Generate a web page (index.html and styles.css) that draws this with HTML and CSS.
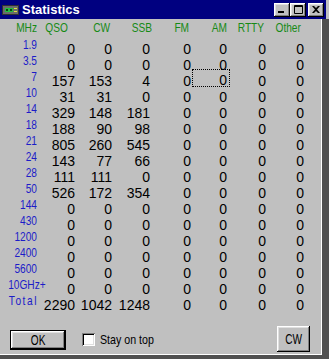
FILE: index.html
```html
<!DOCTYPE html>
<html lang="en">
<head>
    <meta charset="UTF-8">
    <title>Statistics</title>
    <link rel="stylesheet" href="styles.css">
</head>
<body>

    <div class="window">
        <div class="titlebar">
            <svg class="app-icon" width="17" height="10" viewBox="0 0 17 10">
                <rect x="0" y="0" width="17" height="10" fill="#303030"/>
                <rect x="1" y="1" width="15" height="8" fill="#6a6a6a"/>
                <rect x="3" y="3" width="8" height="4" fill="#20c040"/>
                <rect x="12" y="3" width="3" height="1" fill="#e0e040"/>
                <rect x="12" y="6" width="3" height="1" fill="#e0e040"/>
                <rect x="4" y="4" width="2" height="2" fill="#104010"/>
                <rect x="8" y="4" width="2" height="2" fill="#104010"/>
            </svg>
            <span class="title">Statistics</span>
            <div class="caption-buttons">
                <button class="cap-btn">
                    <svg width="8" height="7" viewBox="0 0 8 7"><rect x="0" y="5" width="6" height="2" fill="#000"/></svg>
                </button>
                <button class="cap-btn">
                    <svg width="9" height="9" viewBox="0 0 9 9"><path d="M0.5 0.5h8v8h-8z M0.5 1.5h8" fill="none" stroke="#000"/></svg>
                </button>
                <button class="cap-btn close">
                    <svg width="8" height="7" viewBox="0 0 8 7"><path d="M0 0h2l2 2 2-2h2l-3 3.5 3 3.5h-2l-2-2-2 2h-2l3-3.5z" fill="#000"/></svg>
                </button>
            </div>
        </div>

        <div class="frame">
            <div class="client">
                <div class="stats">
                    <div class="row head"><span>MHz</span><span class="qso">QSO</span><span>CW</span><span class="ssb">SSB</span><span>FM</span><span class="am">AM</span><span>RTTY</span><span class="other">Other</span></div>
                    <div class="row"><span class="band">1.9</span><span>0</span><span>0</span><span>0</span><span>0</span><span>0</span><span>0</span><span>0</span></div>
                    <div class="row"><span class="band">3.5</span><span>0</span><span>0</span><span>0</span><span>0</span><span>0</span><span>0</span><span>0</span></div>
                    <div class="row"><span class="band">7</span><span>157</span><span>153</span><span>4</span><span>0</span><span class="focus">0</span><span>0</span><span>0</span></div>
                    <div class="row"><span class="band">10</span><span>31</span><span>31</span><span>0</span><span>0</span><span>0</span><span>0</span><span>0</span></div>
                    <div class="row"><span class="band">14</span><span>329</span><span>148</span><span>181</span><span>0</span><span>0</span><span>0</span><span>0</span></div>
                    <div class="row"><span class="band">18</span><span>188</span><span>90</span><span>98</span><span>0</span><span>0</span><span>0</span><span>0</span></div>
                    <div class="row"><span class="band">21</span><span>805</span><span>260</span><span>545</span><span>0</span><span>0</span><span>0</span><span>0</span></div>
                    <div class="row"><span class="band">24</span><span>143</span><span>77</span><span>66</span><span>0</span><span>0</span><span>0</span><span>0</span></div>
                    <div class="row"><span class="band">28</span><span>111</span><span>111</span><span>0</span><span>0</span><span>0</span><span>0</span><span>0</span></div>
                    <div class="row"><span class="band">50</span><span>526</span><span>172</span><span>354</span><span>0</span><span>0</span><span>0</span><span>0</span></div>
                    <div class="row"><span class="band">144</span><span>0</span><span>0</span><span>0</span><span>0</span><span>0</span><span>0</span><span>0</span></div>
                    <div class="row"><span class="band">430</span><span>0</span><span>0</span><span>0</span><span>0</span><span>0</span><span>0</span><span>0</span></div>
                    <div class="row"><span class="band">1200</span><span>0</span><span>0</span><span>0</span><span>0</span><span>0</span><span>0</span><span>0</span></div>
                    <div class="row"><span class="band">2400</span><span>0</span><span>0</span><span>0</span><span>0</span><span>0</span><span>0</span><span>0</span></div>
                    <div class="row"><span class="band">5600</span><span>0</span><span>0</span><span>0</span><span>0</span><span>0</span><span>0</span><span>0</span></div>
                    <div class="row"><span class="band">10GHz+</span><span>0</span><span>0</span><span>0</span><span>0</span><span>0</span><span>0</span><span>0</span></div>
                    <div class="row"><span class="band total">Total</span><span>2290</span><span>1042</span><span>1248</span><span>0</span><span>0</span><span>0</span><span>0</span></div>
                </div>

                <div class="footer">
                    <button class="btn default ok"><span class="btn-text">OK</span></button>
                    <label class="check"><span class="box"></span><span class="check-text">Stay on top</span></label>
                    <button class="btn cw"><span class="btn-text">CW</span></button>
                </div>
            </div>
        </div>
    </div>

</body>
</html>
```

FILE: styles.css
```css
body {
    margin: 0;
    background-color: #c0c0c0;
    font-family: "Liberation Sans", Arial, sans-serif;
}
.window {
    width: 329px;
    height: 359px;
    background-color: #c0c0c0;
    display: flex;
    flex-direction: column;
}
.titlebar {
    height: 19px;
    margin-right: 3px;
    background-color: #000080;
    display: flex;
    align-items: center;
    color: white;
}
.app-icon {
    margin-left: 2px;
    margin-top: 1px;
}
.title {
    margin-left: 3px;
    font-weight: bold;
    font-size: 13px;
    line-height: 19px;
}
.caption-buttons {
    margin-left: auto;
    margin-right: 2px;
    display: flex;
}
.cap-btn {
    width: 16px;
    height: 14px;
    padding: 0;
    border: none;
    background-color: #c0c0c0;
    box-shadow: inset -1px -1px #000, inset 1px 1px #fff, inset -2px -2px #808080, inset 2px 2px #dfdfdf;
    display: flex;
    align-items: center;
    justify-content: center;
}
.cap-btn.close {
    margin-left: 2px;
}

/* window edge below the caption */
.frame {
    flex: 1;
    display: flex;
    background-color: #505050;
}
.client {
    width: 322px;
    height: 336px;
    box-sizing: border-box;
    border-right: 1px solid #fff;
    border-bottom: 1px solid #fff;
    background-color: #c0c0c0;
    padding-top: 1px;
}

.row {
    display: grid;
    grid-template-columns: 37px 38px 37px 38px 41px 36px 39px 38px;
    height: 16px;
}
.row span {
    text-align: right;
    font-size: 14px;
    line-height: 16px;
    padding-top: 4px;
    color: #000;
}
/* the band and header font is a tall narrow one */
.row .band,
.head span {
    font-size: 13px;
    padding-top: 0;
    transform: scaleX(0.78);
    transform-origin: right center;
}
.row .band {
    color: #1c1cc8;
}
.row .total {
    letter-spacing: 2px;
    margin-right: -1px;
}
.row .focus {
    outline: 1px dotted #000;
    outline-offset: -1px;
    margin-left: 1px;
    margin-right: -3px;
    padding-right: 3px;
    height: 15px;
    padding-top: 3px;
    line-height: 17px;
}

.head {
    height: 17px;
}
.head span {
    padding-right: 2.5px;
    color: #168a16;
}
.head span:first-child {
    padding-right: 0;
}
.head .qso {
    padding-right: 10px;
}
.head .ssb {
    padding-right: 0;
    margin-right: -2px;
}
.head .am {
    padding-right: 0;
}
.head .other {
    padding-right: 4px;
}

.footer {
    margin-top: 17px;
    height: 26px;
    display: flex;
    align-items: center;
}
.btn {
    padding: 0;
    border: none;
    background-color: #c0c0c0;
    font-family: "Liberation Sans", Arial, sans-serif;
    font-size: 14px;
    color: #000;
    box-shadow: inset -1px -1px #000, inset 1px 1px #fff, inset -2px -2px #808080, inset 2px 2px #dfdfdf;
}
.btn-text {
    display: inline-block;
    transform: scaleX(0.72);
}
.btn.default {
    box-shadow: inset 0 0 0 1px #000, inset -2px -2px #000, inset 2px 2px #fff, inset -3px -3px #808080, inset 3px 3px #dfdfdf;
}
.ok {
    width: 56px;
    height: 20px;
    margin-left: 10px;
    margin-top: 2px;
}
.cw {
    width: 33px;
    height: 26px;
    margin-left: auto;
    margin-right: 11px;
}
.check {
    display: flex;
    align-items: center;
    margin-left: 16px;
    font-size: 13px;
    color: #000;
}
.check-text {
    display: inline-block;
    transform: scaleX(0.82);
    transform-origin: left center;
}
.box {
    width: 13px;
    height: 13px;
    margin-right: 5px;
    background-color: #fff;
    box-shadow: inset 1px 1px #808080, inset -1px -1px #fff, inset 2px 2px #000, inset -2px -2px #dfdfdf;
}
```
